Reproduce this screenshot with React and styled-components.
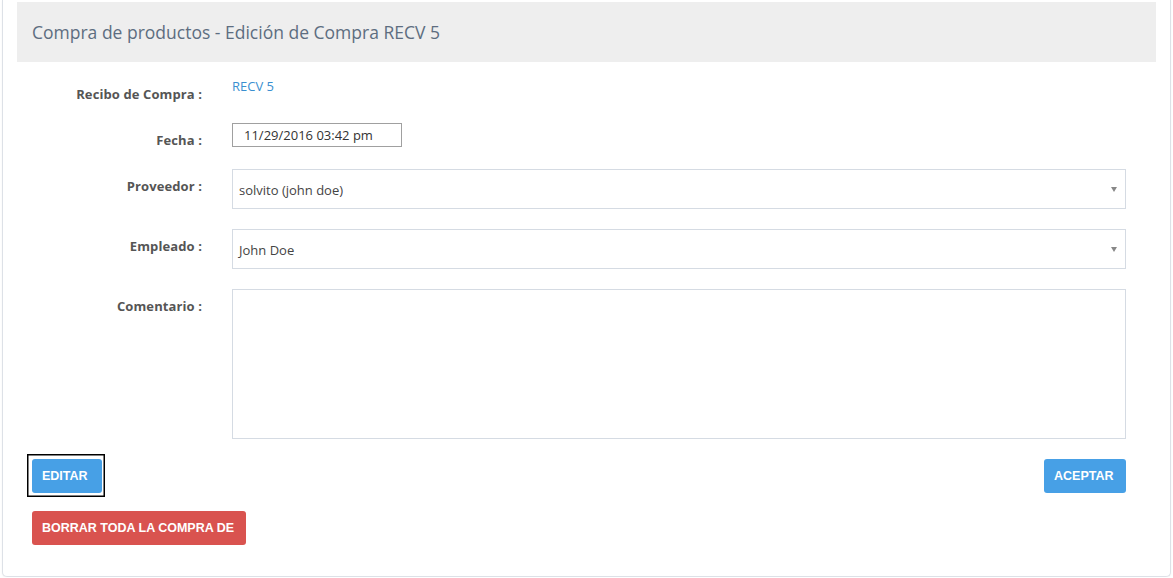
import React from 'react';
import styled, { createGlobalStyle } from 'styled-components';

const GlobalStyle = createGlobalStyle`
  body {
    margin: 0;
    background: #fff;
    font-family: "Open Sans", "Noto Sans", sans-serif;
  }
`;

const Card = styled.div`
  margin: 0 2px;
  padding: 2px 14px 31px 14px;
  border: 1px solid #dde1e7;
  border-top: none;
  border-radius: 0 0 5px 5px;
  background: #fff;
  box-shadow: 0 1px 2px rgba(0, 0, 0, 0.06);
`;

const Header = styled.div`
  height: 60px;
  background: #eeeeee;
  display: flex;
  align-items: center;
  padding: 0 15px;
`;

const Title = styled.h2`
  margin: 0;
  font-size: 17.5px;
  font-weight: 400;
  color: #5d6d80;
`;

const Form = styled.div`
  padding: 15px 30px 0 0;
  display: flex;
  flex-direction: column;
  gap: 20px;
`;

const Row = styled.div`
  display: grid;
  grid-template-columns: 185px 1fr;
  column-gap: 30px;
  align-items: start;
`;

const Label = styled.label`
  text-align: right;
  font-size: 13px;
  font-weight: 700;
  line-height: 18px;
  letter-spacing: 0.1px;
  color: #555;
  padding-top: 8px;
`;

const Value = styled.span`
  font-size: 13px;
  line-height: 18px;
  color: #3a8fd0;
`;

const DateInput = styled.div`
  width: 170px;
  height: 24px;
  box-sizing: border-box;
  border: 1px solid #a0a0a0;
  padding-left: 11px;
  font-size: 13px;
  line-height: 22px;
  color: #333;
`;

const Select = styled.div`
  height: 40px;
  box-sizing: border-box;
  border: 1px solid #d5dbe3;
  display: flex;
  align-items: center;
  justify-content: space-between;
  padding: 1px 8px 0 6px;
  font-size: 13px;
  color: #444;
`;

const Caret = styled.span`
  width: 0;
  height: 0;
  border-left: 3px solid transparent;
  border-right: 3px solid transparent;
  border-top: 5px solid #888;
`;

const TextArea = styled.div`
  height: 150px;
  box-sizing: border-box;
  border: 1px solid #d5dbe3;
`;

const Actions = styled.div`
  padding: 0 30px 0 15px;
  margin-top: 20px;
  display: flex;
  justify-content: space-between;
  align-items: center;
`;

const FocusRing = styled.span`
  display: inline-flex;
  margin: -5px 0 -4px -5px;
  padding: 4px 2px 3px 4px;
  border: 1px solid #000;
  box-shadow: inset 0 0 0 0.5px #000;
`;

const Button = styled.button`
  height: 34px;
  padding: 0 0 0 10px;
  border: none;
  border-radius: 3px;
  background: ${p => (p.$danger ? '#d9534f' : '#47a0e6')};
  color: #fff;
  font-family: "Liberation Sans", Arial, sans-serif;
  font-size: 12.5px;
  font-weight: 700;
  text-align: left;
  text-transform: uppercase;
  cursor: pointer;
`;

const DangerRow = styled.div`
  padding-left: 15px;
  margin-top: 18px;
`;

export default function App() {
  return (
    <>
      <GlobalStyle />
      <Card>
        <Header>
          <Title>Compra de productos - Edición de Compra RECV 5</Title>
        </Header>
        <Form>
          <Row>
            <Label>Recibo de Compra :</Label>
            <Value>RECV 5</Value>
          </Row>
          <Row>
            <Label>Fecha :</Label>
            <DateInput>11/29/2016 03:42 pm</DateInput>
          </Row>
          <Row>
            <Label>Proveedor :</Label>
            <Select>
              <span>solvito (john doe)</span>
              <Caret />
            </Select>
          </Row>
          <Row>
            <Label>Empleado :</Label>
            <Select>
              <span>John Doe</span>
              <Caret />
            </Select>
          </Row>
          <Row>
            <Label>Comentario :</Label>
            <TextArea />
          </Row>
        </Form>
        <Actions>
          <FocusRing>
            <Button style={{ width: 70 }}>Editar</Button>
          </FocusRing>
          <Button style={{ width: 82 }}>Aceptar</Button>
        </Actions>
        <DangerRow>
          <Button $danger style={{ width: 214 }}>Borrar toda la compra de</Button>
        </DangerRow>
      </Card>
    </>
  );
}
